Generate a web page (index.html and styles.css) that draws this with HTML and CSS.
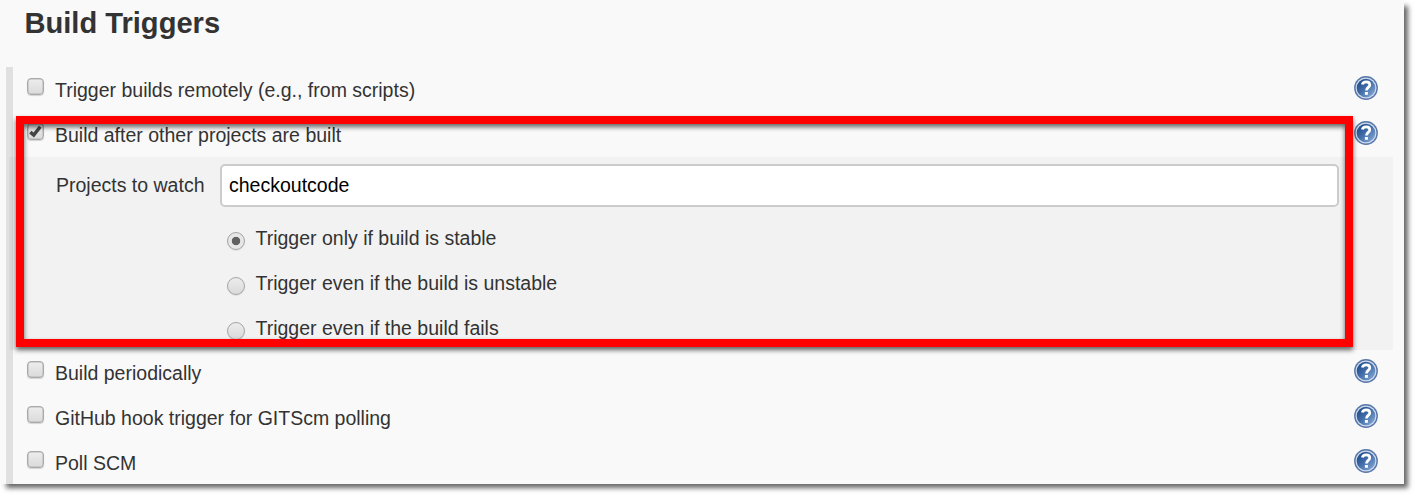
FILE: index.html
```html
<!DOCTYPE html>
<html lang="en">
<head>
<meta charset="utf-8">
<title>Build Triggers</title>
<link rel="stylesheet" href="styles.css">
</head>
<body>
<svg class="defs" aria-hidden="true">
  <defs>
    <linearGradient id="disc" x1="0" y1="0" x2="1" y2="1">
      <stop offset="0.1" stop-color="#1f4a8a"/>
      <stop offset=".5" stop-color="#4570aa"/>
      <stop offset="1" stop-color="#8fb2dc"/>
    </linearGradient>
    <symbol id="help" viewBox="0 0 24 24">
      <circle cx="12" cy="12" r="11.9" fill="#5877a9"/>
      <circle cx="12" cy="12" r="10.5" fill="#d0dced"/>
      <circle cx="12" cy="12" r="9.3" fill="url(#disc)"/>
      <path d="M8.3 8.5C8.7 6.5 10.2 5.8 12.1 5.8c2.3 0 3.7 1.1 3.7 2.9 0 2.7-3.4 2.7-3.4 5.9" fill="none" stroke="#fff" stroke-width="2.7"/>
      <rect x="10.9" y="16" width="3" height="2.8" fill="#fff"/>
    </symbol>
  </defs>
</svg>
<main class="panel">
  <h1 class="title">Build Triggers</h1>
  <div class="section">
    <div class="row"><span class="check"></span><span class="label">Trigger builds remotely (e.g., from scripts)</span><svg class="help"><use href="#help"/></svg></div>
    <div class="row"><span class="check"><svg class="tick" viewBox="0 0 13 13"><path d="M2 7 5 9.6 10.6 2.4" fill="none" stroke="#444" stroke-width="3"/></svg></span><span class="label">Build after other projects are built</span><svg class="help"><use href="#help"/></svg></div>
    <div class="nested">
      <div class="field"><span class="name">Projects to watch</span><div class="input">checkoutcode</div></div>
      <div class="option"><span class="radio on"></span><span>Trigger only if build is stable</span></div>
      <div class="option"><span class="radio"></span><span>Trigger even if the build is unstable</span></div>
      <div class="option"><span class="radio"></span><span>Trigger even if the build fails</span></div>
    </div>
    <div class="row"><span class="check"></span><span class="label">Build periodically</span><svg class="help"><use href="#help"/></svg></div>
    <div class="row"><span class="check"></span><span class="label">GitHub hook trigger for GITScm polling</span><svg class="help"><use href="#help"/></svg></div>
    <div class="row last"><span class="check"></span><span class="label">Poll SCM</span><svg class="help"><use href="#help"/></svg></div>
  </div>
  <div class="highlight"></div>
</main>
</body>
</html>
```
FILE: styles.css
```css
* { box-sizing: border-box; }
body {
  margin: 0;
  height: 498px;
  background: #fff;
  color: #333;
  font: 19.5px/24px "Liberation Sans", Arial, sans-serif;
}
.defs { display: block; width: 0; height: 0; }
.panel {
  position: relative;
  width: 1404px;
  height: 484px;
  background: #f9f9f9;
  box-shadow: 5px 5px 5px -1px rgba(0, 0, 0, .6);
}
.title {
  margin: 0;
  height: 67px;
  padding: 6px 0 0 24.5px;
  font-size: 29.1px;
  line-height: 34px;
}
.section {
  height: 417px;
  margin-left: 6px;
  border-left: 7px solid #e0e0e0;
}
.row {
  display: flex;
  align-items: flex-start;
  height: 45px;
  padding: 9px 26px 0 14px;
}
.last { height: 44px; }
.check {
  width: 17px;
  height: 17px;
  margin: 2px 11px 0 0;
  border: 1px solid #aaa;
  border-radius: 4px;
  background: linear-gradient(#ededed, #dadada);
  box-shadow: inset 0 0 0 .5px #b5b5b5, 0 1px 1px rgba(0, 0, 0, .15);
}
.tick { display: block; width: 15px; height: 15px; }
.label { flex: 1; padding-top: 2px; }
.help { width: 24px; height: 24px; }
.nested {
  height: 193px;
  margin: 0 11px 0 -4px;
  padding: 7px 54px 0 47px;
  background: rgba(0, 0, 0, .028);
}
.field { display: flex; height: 52px; }
.name { width: 164px; padding-top: 9px; }
.input {
  flex: 1;
  height: 43px;
  padding: 7px;
  border: 2px solid #ccc;
  border-radius: 5px;
  background: #fff;
  color: #000;
}
.option {
  display: flex;
  height: 45px;
  gap: 10.5px;
  padding: 10px 0 0 171px;
}
.radio {
  width: 18px;
  height: 18px;
  margin-top: 6px;
  border: 1px solid #a5a5a5;
  border-radius: 50%;
  background: linear-gradient(#ececec, #dadada);
  box-shadow: 0 1px 1px rgba(0, 0, 0, .08);
}
.on { background: radial-gradient(circle, #606060 0 3.8px, #e6e6e6 4.6px); }
/* Callout frame lying over the form */
.highlight {
  position: absolute;
  left: 16px;
  top: 116px;
  width: 1337px;
  height: 231px;
  border: 8px solid #f00;
  filter: drop-shadow(0 3px 2.5px rgba(0, 0, 0, .6));
}
```
